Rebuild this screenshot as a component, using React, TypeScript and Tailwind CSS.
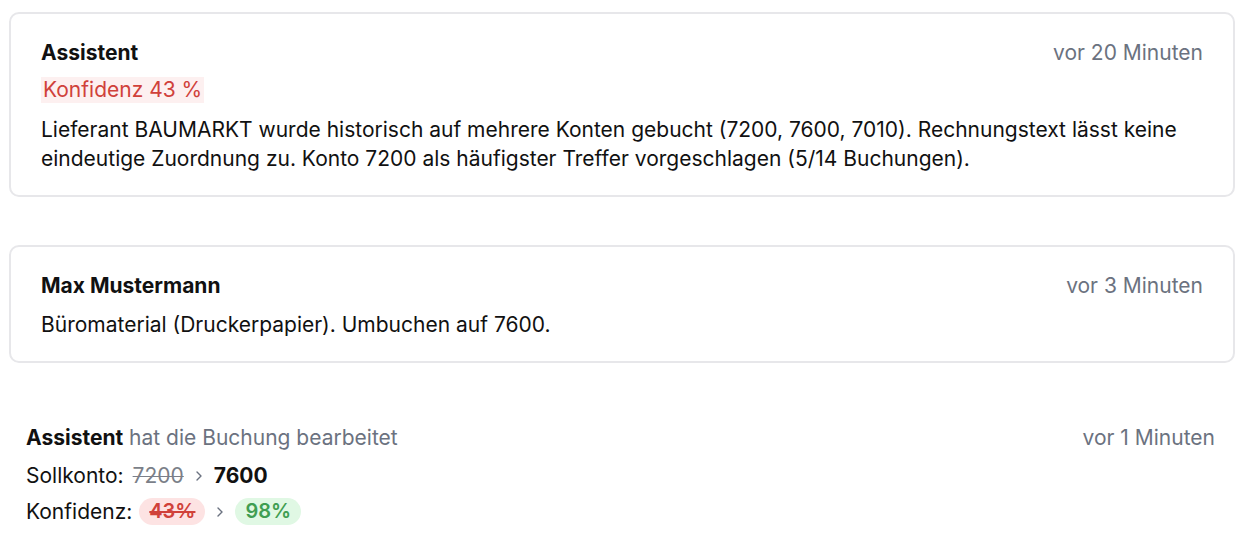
import React from "react";

const font = { fontFamily: "Inter, 'Noto Sans', 'Liberation Sans', sans-serif" };

function Chevron() {
  return (
    <svg width="8" height="12" viewBox="0 0 8 12" className="mx-[11px] text-[#6b7280]">
      <path d="M2 2l4 4-4 4" fill="none" stroke="currentColor" strokeWidth="1.4" strokeLinecap="round" strokeLinejoin="round" />
    </svg>
  );
}

function Card({
  author,
  time,
  children,
}: {
  author: string;
  time: string;
  children: React.ReactNode;
}) {
  return (
    <div className="rounded-[10px] border-2 border-[#e7e7ea] bg-white px-[30px] pt-[24px] pb-[22px]">
      <div className="flex items-center justify-between leading-[29px]">
        <span className="text-[21px] font-bold text-[#111]">{author}</span>
        <span className="text-[21px] text-[#6b7280]">{time}</span>
      </div>
      {children}
    </div>
  );
}

export default function App() {
  return (
    <div className="min-h-screen bg-white text-[#111]" style={font}>
      <div className="ml-[9px] w-[1226px] pt-[12px]">
        <Card author="Assistent" time="vor 20 Minuten">
          <div className="mt-[10px]">
            <span className="inline-block bg-[#fdf0f0] px-[2px] text-[21px] leading-[26px] text-[#d0413a]">
              Konfidenz 43 %
            </span>
          </div>
          <p className="mt-[12px] text-[21px] leading-[29px]">
            Lieferant BAUMARKT wurde historisch auf mehrere Konten gebucht (7200, 7600, 7010). Rechnungstext lässt keine
            <br />
            eindeutige Zuordnung zu. Konto 7200 als häufigster Treffer vorgeschlagen (5/14 Buchungen).
          </p>
        </Card>

        <div className="mt-[48px]">
          <Card author="Max Mustermann" time="vor 3 Minuten">
            <p className="mt-[10px] text-[21px] leading-[29px]">
              Büromaterial (Druckerpapier). Umbuchen auf 7600.
            </p>
          </Card>
        </div>

        <div className="mt-[60px] pl-[17px] pr-[20px]">
          <div className="flex items-center justify-between leading-[29px] text-[21px]">
            <span>
              <span className="font-bold">Assistent</span>{" "}
              <span className="text-[#6b7280]">hat die Buchung bearbeitet</span>
            </span>
            <span className="text-[#6b7280]">vor 1 Minuten</span>
          </div>
          <div className="mt-[9px] flex items-center text-[21px] leading-[29px]">
            <span>Sollkonto:</span>
            <span className="ml-[9px] text-[#7b7f89] line-through decoration-1">7200</span>
            <Chevron />
            <span className="font-bold">7600</span>
          </div>
          <div className="mt-[7px] flex items-center text-[21px] leading-[29px]">
            <span>Konfidenz:</span>
            <span className="ml-[7px] rounded-full bg-[#fde3e3] px-[10px] text-[20px] font-semibold leading-[27px] text-[#d0413a] line-through decoration-2">
              43%
            </span>
            <Chevron />
            <span className="rounded-full bg-[#e0f8e4] px-[10px] text-[20px] font-semibold leading-[27px] text-[#3f9e52]">
              98%
            </span>
          </div>
        </div>
      </div>
    </div>
  );
}
